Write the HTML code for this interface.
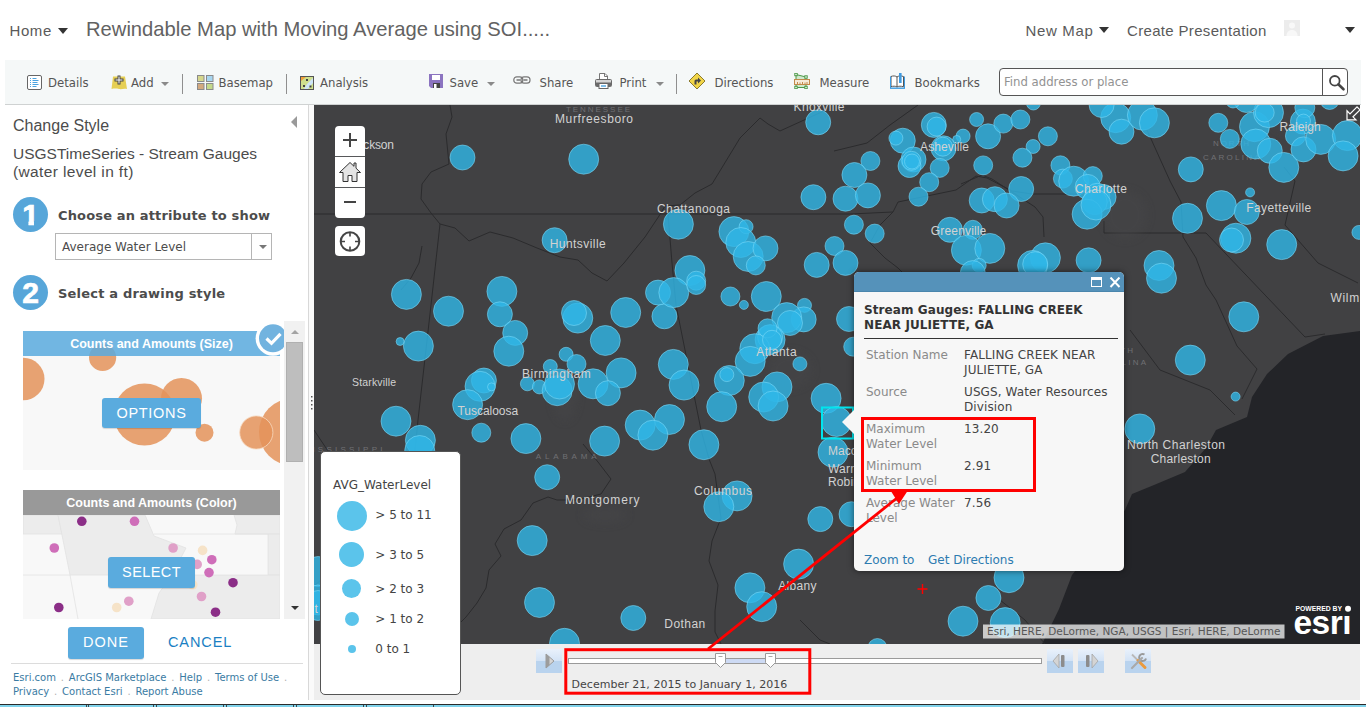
<!DOCTYPE html>
<html lang="en">
<head>
<meta charset="utf-8">
<title>Rewindable Map with Moving Average using SOI</title>
<style>
*{box-sizing:border-box;margin:0;padding:0}
html,body{width:1366px;height:707px;overflow:hidden;background:#fff}
body{position:relative;font-family:"Liberation Sans",sans-serif;color:#4c4c4c}
.abs{position:absolute}
.vd{font-family:"DejaVu Sans","Liberation Sans",sans-serif}
.vc{font-family:"DejaVu Sans Condensed","DejaVu Sans","Liberation Sans",sans-serif}
/* header */
#hdr{left:0;top:0;width:1366px;height:60px;background:#fff}
#hdr span{position:absolute;white-space:nowrap;color:#5a5a5a;line-height:1}
.tri{position:absolute;width:0;height:0;border-left:5px solid transparent;border-right:5px solid transparent;border-top:6px solid #333}
/* toolbar */
#tb{left:5px;top:60px;width:1356px;height:45px;background:#f5f8f8;border-bottom:1px solid #cfd2d2}
#tb .t{position:absolute;top:15px;font-size:13px;color:#555;white-space:nowrap;line-height:16px;font-family:"DejaVu Sans Condensed","DejaVu Sans",sans-serif}
#tb .sep{position:absolute;top:14px;width:1px;height:20px;background:#8f8f8f}
#tb .dd{position:absolute;top:22px;width:0;height:0;border-left:4px solid transparent;border-right:4px solid transparent;border-top:4px solid #8a8a8a}
#tb svg{position:absolute}
#search{left:994px;top:8px;width:349px;height:28px;border:1px solid #555;border-radius:4px;background:#fff}
#search span{position:absolute;left:4px;top:5px;font-size:13px;color:#929292;font-family:"DejaVu Sans Condensed","DejaVu Sans",sans-serif;line-height:16px}
#search i{position:absolute;left:322px;top:0;width:1px;height:26px;background:#555}
/* left panel */
#lp{left:5px;top:105px;width:304px;height:595px;background:#fff;border-right:1px solid #d8d8d8}
#lp .h1{position:absolute;left:8px;top:12px;font-size:16px;color:#4c4c4c;line-height:18px}
#lp .h2{position:absolute;left:8px;top:40px;font-size:15.5px;color:#4c4c4c;line-height:18px;white-space:nowrap}
.num{position:absolute;width:35px;height:35px;border-radius:50%;background:#57a6d9;color:#fff;font-weight:700;font-size:30px;line-height:35px;text-align:center;font-family:"Liberation Sans",sans-serif;-webkit-text-stroke:.7px #fff}
.num span{display:inline-block;height:35px;clip-path:polygon(0 0,100% 0,100% 23.900px,11.800px 23.900px,11.800px 100%,6.300px 100%,6.300px 23.900px,0 23.900px)}
.step{position:absolute;left:53px;font-weight:700;font-size:13px;letter-spacing:.15px;color:#4c4c4c;white-space:nowrap;line-height:16px}
#sel{left:50px;top:128px;width:217px;height:27px;border:1px solid #b5b5b5;background:#fff}
#sel span{position:absolute;left:6px;top:5.500px;font-size:12px;color:#4c4c4c;line-height:15px;white-space:nowrap}
#sel i{position:absolute;left:195px;top:0;width:1px;height:25px;background:#b5b5b5}
#sel b{position:absolute;left:203px;top:11px;width:0;height:0;border-left:4px solid transparent;border-right:4px solid transparent;border-top:4px solid #777}
.card{position:absolute;left:18px;width:257px;overflow:hidden;background:#f8f8f8}
.card .ch{position:absolute;left:0;top:0;width:257px;height:25px;color:#fff;font-weight:700;font-size:12.5px;line-height:26px;text-align:center;white-space:nowrap}
.btn{position:absolute;background:#5aabde;color:#fff;border-radius:3px;text-align:center;white-space:nowrap;box-shadow:0 1px 1px rgba(0,0,0,.15)}
#sb{left:279px;top:216px;width:21px;height:298px;background:#f1f1f1}
#sb .th{position:absolute;left:2px;top:21px;width:17px;height:120px;background:#bebebe;border:1px solid #b0b0b0}
#sb .up{position:absolute;left:6.500px;top:9px;width:0;height:0;border-left:4px solid transparent;border-right:4px solid transparent;border-bottom:4px solid #a3a3a3}
#sb .dn{position:absolute;left:6.500px;top:285px;width:0;height:0;border-left:4px solid transparent;border-right:4px solid transparent;border-top:4px solid #333}
#ft{left:8px;top:565.500px;width:290px;font-size:10px;line-height:14px;color:#3a7ba3}
#ft i{font-style:normal;color:#b0b0b0;margin:0 1.650px}
#gut{left:309px;top:105px;width:5px;height:595px;background:#fafafa}
/* map */
#map{left:314px;top:105px;width:1046px;height:539px;background:#414143;overflow:hidden}
#map svg{position:absolute;left:0;top:0}
.zb{position:absolute;left:21px;width:30px;background:#fff;border-radius:4px}
#ts{left:314px;top:644px;width:1046px;height:56px;background:#eeeeee}
.tbn{position:absolute;top:5px;height:24px;background:linear-gradient(#e9f1fb 0%,#d3e3f6 50%,#b9d3ee 52%,#b9d3ee 100%)}
#bot{left:0;top:704px;width:1366px;height:3px;background:#7fd2ea;border-top:1px solid #2a2a2a}
/* popup */
#pop{left:854px;top:272px;width:270px;height:299px;border-radius:5px;background:#f7f7f7;box-shadow:0 0 6px rgba(0,0,0,.55)}
#pop .ph{position:absolute;left:0;top:0;width:270px;height:20px;background:#5592ba;border-radius:5px 5px 0 0;border-bottom:1px solid #4a86ad}
#pop .pt{position:absolute;left:10px;top:31px;width:256px;font-weight:700;font-size:12px;line-height:15px;color:#333;white-space:nowrap;letter-spacing:.09px}
#pop hr{position:absolute;left:10px;top:66px;width:254px;height:1px;border:0;background:#333}
#pop .k{position:absolute;left:12px;font-size:12px;line-height:15px;color:#8a8a8a;white-space:nowrap}
#pop .v{position:absolute;left:110px;font-size:12px;line-height:15px;color:#444;white-space:nowrap;letter-spacing:.1px}
#pop .a{position:absolute;top:280.700px;font-size:12px;line-height:15px;color:#2d7bb0;white-space:nowrap}
/* legend */
#lg{left:320px;top:451px;width:141px;height:244px;background:#fff;border:1px solid #555;border-radius:5px}
#lg span{position:absolute;font-size:12px;line-height:15px;color:#444;white-space:nowrap}
#lg i{position:absolute;border-radius:50%;background:#5bc4eb}
.lbl{fill:#d2d2d2;font-family:"Liberation Sans",sans-serif;font-size:12px}
.st{fill:#707073;font-family:"Liberation Sans",sans-serif;font-size:8px}
</style>
</head>
<body>

<div id="hdr" class="abs">
  <span style="left:9.500px;top:22.800px;font-size:15px;letter-spacing:.6px">Home</span><i class="tri" style="left:57.500px;top:27.500px"></i>
  <span style="left:86px;top:19.200px;font-size:20.2px;color:#626262">Rewindable Map with Moving Average using SOI.....</span>
  <span style="left:1025.500px;top:22.800px;font-size:15px;letter-spacing:.65px">New Map</span><i class="tri" style="left:1098.500px;top:26.500px"></i>
  <span style="left:1127px;top:22.800px;font-size:15px;letter-spacing:.33px">Create Presentation</span>
  <svg class="abs" style="left:1284px;top:20px" width="16" height="16" viewBox="0 0 16 16"><rect width="16" height="16" fill="#ececec"/><circle cx="8" cy="5.5" r="3" fill="#f8f8f8"/><path d="M2.5 16c0-4 2.5-6 5.5-6s5.500 2 5.500 6z" fill="#f8f8f8"/></svg>
  <i class="tri" style="left:1344.500px;top:26.500px"></i>
</div>
<div id="tb" class="abs">
  <svg style="left:22px;top:15px" width="15" height="15" viewBox="0 0 15 15"><rect x=".5" y=".5" width="14" height="14" rx="1.500" fill="#fff" stroke="#666"/><g stroke="#4aa3e0" stroke-width="1"><path d="M3 3.500h1M3 5.500h1M3 7.500h1M3 9.500h1M3 11.500h1"/><path d="M5.500 3.500h4M5.500 5.500h6M5.500 7.500h5M5.500 9.500h6M5.500 11.500h4"/></g></svg>
  <span class="t" style="left:43px">Details</span>
  <svg style="left:106px;top:15px" width="17" height="16" viewBox="0 0 17 16"><path d="M2 1.500h12l2 12.500c-3-1-5 .6-8 0s-5-.4-7.500 0z" fill="#e6cf55"/><path d="M8 .5v9M3.500 5h9" stroke="#444" stroke-width="3"/><path d="M8 1.500v7M4.500 5h7" stroke="#fff" stroke-width="1"/></svg>
  <span class="t" style="left:126px">Add</span><i class="dd" style="left:156px"></i>
  <i class="sep" style="left:177px"></i>
  <svg style="left:192px;top:15px" width="17" height="16" viewBox="0 0 17 16"><g stroke="#8a8a8a"><rect x=".5" y=".5" width="6.500" height="6" fill="#d5d78c"/><rect x="9.500" y=".5" width="6.500" height="6" fill="#a7d6f0"/><rect x=".5" y="8.500" width="6.500" height="6" fill="#d3a97e"/><rect x="9.500" y="8.500" width="6.500" height="6" fill="#c4d98a"/></g></svg>
  <span class="t" style="left:213.500px">Basemap</span>
  <i class="sep" style="left:281px"></i>
  <svg style="left:295px;top:16px" width="14" height="14" viewBox="0 0 14 14"><rect x=".5" y=".5" width="13" height="13" fill="#cfe08d" stroke="#555"/><path d="M1 1h5l-5 4z" fill="#f0a03c"/><path d="M13 2 7 8l-3 5h4l5-6z" fill="#cfe6f7"/><g fill="#444"><rect x="6" y="3" width="2" height="2"/><rect x="9.500" y="9.500" width="2" height="2"/><rect x="3" y="9" width="2" height="2"/></g></svg>
  <span class="t" style="left:315px">Analysis</span>
  <svg style="left:424px;top:14px" width="14" height="14" viewBox="0 0 14 14"><path d="M0 0h14v14H2l-2-2z" fill="#8b74c0"/><rect x="3" y="1" width="8" height="5" fill="#fff"/><rect x="4" y="9" width="7" height="5" fill="#444"/><rect x="5" y="10" width="2.500" height="4" fill="#fff"/></svg>
  <span class="t" style="left:444.500px">Save</span><i class="dd" style="left:481.500px"></i>
  <svg style="left:508px;top:16px" width="18" height="9" viewBox="0 0 18 9"><g fill="none" stroke="#777" stroke-width="1.200"><rect x=".8" y=".8" width="9" height="6.400" rx="3"/><rect x="8" y=".8" width="9" height="6.400" rx="3"/><path d="M3.500 4h4M10.500 4h4" stroke-width="1.400"/></g></svg>
  <span class="t" style="left:534.500px">Share</span>
  <svg style="left:590px;top:13px" width="17" height="16" viewBox="0 0 17 16"><path d="M4.500 6.500v-6h5.500l2.500 2.500v3.500" fill="#fff" stroke="#777"/><path d="M9.500 .5v3h3" fill="none" stroke="#777"/><rect x=".5" y="6.500" width="16" height="7" rx="1" fill="#d4d4d4" stroke="#6a6a6a"/><rect x="1" y="9.500" width="15" height="3.500" fill="#6a6a6a"/><rect x="4" y="10.500" width="9" height="5" fill="#fff" stroke="#666"/><path d="M6 13h5" stroke="#4aa3e0" stroke-width="1.400"/></svg>
  <span class="t" style="left:614.500px">Print</span><i class="dd" style="left:650.500px"></i>
  <i class="sep" style="left:671px"></i>
  <svg style="left:683px;top:12px" width="18" height="18" viewBox="0 0 18 18"><path d="M9 1l8 8-8 8-8-8z" fill="#f1d548" stroke="#8a7a30" stroke-width="1"/><path d="M6.500 12.500v-3.500q0-1.500 1.500-1.500h2v-2l3 3-3 3v-2h-1.500v3z" fill="#444"/></svg>
  <span class="t" style="left:709.500px">Directions</span>
  <svg style="left:789px;top:13px" width="16" height="16" viewBox="0 0 16 16"><path d="M2 1.500l10 2.500v10.500H2z" fill="#cfe8cd" stroke="#4b9a47"/><rect x=".5" y="6.500" width="15" height="5" fill="#f6ead8" stroke="#c28a4a"/><path d="M3.500 9v2.500M6 9.500v2M8.500 9v2.500M11 9.500v2M13 9v2.500" stroke="#c28a4a"/><g fill="#fff" stroke="#4b9a47"><rect x=".8" y=".3" width="2.400" height="2.400"/><rect x="10.800" y="2.800" width="2.400" height="2.400"/><rect x=".8" y="13.300" width="2.400" height="2.400"/><rect x="10.800" y="13.300" width="2.400" height="2.400"/></g></svg>
  <span class="t" style="left:814.500px">Measure</span>
  <svg style="left:885px;top:13px" width="15" height="16" viewBox="0 0 15 16"><path d="M1 3.500c2-.8 4.500-.8 6 .5v10c-1.500-1-4-1-6-.3zM7 4c1.500-1.300 4-1.300 6.500-.5v10.200c-2.500-.7-5-.7-6.500.3" fill="#fff" stroke="#555" stroke-width="1"/><rect x="9" y="0" width="2.600" height="10" fill="#3f9be0"/><path d="M0 15.200h15" stroke="#3f9be0" stroke-width="1.400"/><path d="M.5 3.500v11.500M14.500 3.500v11.500" stroke="#3f9be0" stroke-width="1"/></svg>
  <span class="t" style="left:909.500px">Bookmarks</span>
  <div id="search" class="abs"><span>Find address or place</span><i></i>
    <svg style="left:328px;top:5px" width="18" height="18" viewBox="0 0 18 18"><circle cx="6.800" cy="6.800" r="4.800" fill="none" stroke="#444" stroke-width="1.800"/><path d="M10.300 10.300l5.200 5" stroke="#444" stroke-width="2.600" stroke-linecap="round"/></svg>
  </div>
</div>

<div id="lp" class="abs">
  <div class="h1">Change Style</div>
  <svg class="abs" style="left:285px;top:10px" width="8" height="14" viewBox="0 0 8 14"><path d="M7 1v12L1 7z" fill="#9a9a9a"/></svg>
  <div class="h2">USGSTimeSeries - Stream Gauges<br><span style="letter-spacing:.37px">(water level in ft)</span></div>
  <div class="num" style="left:8px;top:92px"><span>1</span></div>
  <div class="step vd" style="left:53px;top:103px">Choose an attribute to show</div>
  <div id="sel" class="abs vd"><span>Average Water Level</span><i></i><b></b></div>
  <div class="num" style="left:8px;top:170px">2</div>
  <div class="step vd" style="left:53px;top:181px;letter-spacing:.2px">Select a drawing style</div>

  <div class="card" style="top:226px;height:139px">
    <svg class="abs" style="left:0;top:0" width="257" height="139" viewBox="23 331 257 139">
      <g fill="#e4935a" fill-opacity=".85">
        <circle cx="23.200" cy="379" r="21.300"/><circle cx="102.600" cy="357.500" r="13.600"/>
        <circle cx="144.500" cy="414.500" r="31"/><circle cx="181.500" cy="398.500" r="20.500"/>
        <circle cx="204.500" cy="432.700" r="9"/><circle cx="256.300" cy="432.500" r="16.600"/>
        <circle cx="292.500" cy="432" r="33.500"/>
      </g>
      <circle cx="256.300" cy="432.500" r="16.600" fill="none" stroke="#f6d9c0" stroke-width=".8"/>
    </svg>
    <div class="ch" style="background:rgba(89,170,222,.85)">Counts and Amounts (Size)</div>
    <div class="btn" style="left:79px;top:67px;width:99px;height:30px;font-size:14.500px;line-height:30px;letter-spacing:.7px">OPTIONS</div>
  </div>
  <svg class="abs" style="left:249px;top:215px" width="40" height="40" viewBox="0 0 40 40"><circle cx="19" cy="18.300" r="17.400" fill="#fff"/><circle cx="19" cy="18.300" r="14" fill="#72b3df"/><path d="M12.500 18.500l5 4.800 9-9.500" fill="none" stroke="#fff" stroke-width="3.200"/></svg>

  <div class="card" style="top:385px;height:129px">
    <svg class="abs" style="left:0;top:0" width="257" height="129" viewBox="0 0 257 129">
      <rect width="257" height="129" fill="#f8f8f8"/>
      <g fill="#ececec" stroke="#e2e2e2" stroke-width=".8">
        <path d="M0 25h35l4 19H0z"/>
        <path d="M35 25h87l9 21 32 12-14 27H47z"/>
        <path d="M211 25h46v19h-45l2-9z"/>
        <path d="M245 44h12v41h-12z"/>
        <path d="M149 85h108v44H128l8-26z"/>
      </g>
      <g fill="none" stroke="#e2e2e2" stroke-width=".8"><path d="M131 44h114M47 85l8 44M47 85H0"/></g>
      <circle cx="58.8" cy="31.3" r="4.800" fill="#8b2e87"/><circle cx="111.5" cy="31.3" r="4.800" fill="#cf6eb9"/><circle cx="31.3" cy="58.0" r="4.800" fill="#cf6eb9"/><circle cx="150.1" cy="58.0" r="4.800" fill="#e0a0c8"/><circle cx="179.6" cy="60.4" r="4.800" fill="#f6e3c8"/><circle cx="188.8" cy="69.7" r="4.800" fill="#cf6eb9"/><circle cx="174.2" cy="74.4" r="4.800" fill="#e0a0c8"/><circle cx="186.0" cy="82.6" r="4.800" fill="#cf6eb9"/><circle cx="210.0" cy="92.7" r="4.800" fill="#8b2e87"/><circle cx="169.8" cy="94.8" r="4.800" fill="#f6e3c8"/><circle cx="178.5" cy="106.5" r="4.800" fill="#e0a0c8"/><circle cx="105.8" cy="111.2" r="4.800" fill="#e0a0c8"/><circle cx="93.7" cy="117.5" r="4.800" fill="#f6e3c8"/><circle cx="35.8" cy="117.5" r="4.800" fill="#8b2e87"/><circle cx="192.5" cy="122.2" r="4.800" fill="#8b2e87"/>
    </svg>
    <div class="ch" style="background:#999">Counts and Amounts (Color)</div>
    <div class="btn" style="left:85px;top:67px;width:87px;height:31px;font-size:14.500px;line-height:30px;letter-spacing:.4px">SELECT</div>
  </div>
  <div id="sb" class="abs"><i class="up"></i><i class="th"></i><i class="dn"></i></div>

  <div class="btn" style="left:63px;top:522px;width:76px;height:32px;font-size:14.500px;line-height:31px;letter-spacing:1px">DONE</div>
  <div class="abs" style="left:163px;top:522px;font-size:14.500px;line-height:31px;letter-spacing:.9px;color:#1b7fc3">CANCEL</div>
  <div class="abs" style="left:6px;top:558px;width:292px;height:1px;background:#dcdcdc"></div>
  <div id="ft" class="abs vd">Esri.com <i>.</i> ArcGIS Marketplace <i>.</i> Help <i>.</i> Terms of Use <i>.</i><br>Privacy <i>.</i> Contact Esri <i>.</i> Report Abuse</div>
</div>
<div id="gut" class="abs"><svg class="abs" style="left:1.500px;top:291px" width="3" height="16"><g fill="#555"><rect y="0" width="1.500" height="1.500"/><rect y="4" width="1.500" height="1.500"/><rect y="8" width="1.500" height="1.500"/><rect y="12" width="1.500" height="1.500"/></g></svg></div>

<div id="map" class="abs">
<svg width="1046" height="539" viewBox="314 105 1046 539">
  <defs><filter id="bl" x="-30%" y="-30%" width="160%" height="160%"><feGaussianBlur stdDeviation="4"/></filter></defs>
  <path d="M1360 331L1323 336 1288 354 1267 374 1252 397 1247 417 1216 430 1206 448 1185 472 1154 485 1132 494 1125 510 1100 540 1072 575 1059 609 1044 640 1042 644H1360z" fill="#232428"/>
  <g fill="none" stroke="#2b2b2d" stroke-width="1" stroke-linejoin="round"><path d="M314 214H850"/><path d="M440 224L431 305 418 420l-6 60 2 80 4 84"/><path d="M450 105l2 12-6 17 3 30-18 8-9 12-1 15 10 14 9 11 15 4 14 13 21-9 23 6 24 10 23 9 18 3 14 13 15 8 17-18 21-26 14-21 6-10 15-1 15-12 17-9 28-46 20-20 8 6 12 7 46-21"/><path d="M422 246l-3 17-8 15-10 12"/><path d="M668 214l4 49 4 42 25 125 8 29 6 15 6 44-9 23-3 20 9 24-3 26v21l6 12"/><path d="M834 151l33-8 23-18 28-20"/><path d="M850 214l43-2 5-10 58-12 20-14 11 2 25 13 20 3h48"/><path d="M961 184l21-9 10 4 20 13 23 15 8 10 1 20"/><path d="M1104 221v12H1206l99 104 20-3"/><path d="M893 212l-13 13-10 18 15 15 13 10 17 17"/><path d="M1147 130l23 51 11 21 2 35 13 21 10 27 10 15 21 46 20 23-15 30"/><path d="M1130 330l30 40 50 20 25 25"/><path d="M1284 167l11 14-10 44 33 38 40 20"/><path d="M430 555l-10 25-30 20-30 40M345 505l10 25-10 30-30 25M314 430l20 30"/><path d="M583 444l15 18 13 17-10 15-24 6h-20l-9-3-15 6-12 17-17 9-9 15 6 12-12 14-3 18-9 15-11 14-6 6"/><path d="M800 620l20 20 10 4M1000 600l25 20 20 24"/></g>
  <g fill="#47474a" opacity=".45" filter="url(#bl)"><ellipse cx="1125" cy="215" rx="22" ry="24"/><ellipse cx="790" cy="370" rx="22" ry="18"/><ellipse cx="565" cy="395" rx="12" ry="26"/><ellipse cx="1290" cy="120" rx="18" ry="12"/><ellipse cx="605" cy="515" rx="22" ry="8"/></g>
  <g><text class="st" x="302.5" y="452" textLength="80.0" lengthAdjust="spacing">MISSISSIPPI</text><text class="st" x="535.7" y="459" textLength="61.0" lengthAdjust="spacing">ALABAMA</text><text class="st" x="1213.0" y="146" textLength="36.0" lengthAdjust="spacing">NORTH</text><text class="st" x="1203.0" y="160" textLength="56.5" lengthAdjust="spacing">CAROLINA</text><text class="st" x="1097.0" y="353" textLength="36.0" lengthAdjust="spacing">SOUTH</text><text class="st" x="1089.5" y="365" textLength="56.5" lengthAdjust="spacing">CAROLINA</text><text class="st" x="566.0" y="112" textLength="64.0" lengthAdjust="spacing">TENNESSEE</text></g>
  <g fill="rgb(47,183,231)" fill-opacity=".8" stroke="rgb(130,220,250)" stroke-opacity=".55" stroke-width="1">
<circle cx="462.5" cy="157.5" r="12.5"/>
<circle cx="554.6" cy="240.2" r="12.5"/>
<circle cx="583.7" cy="159.2" r="15.0"/>
<circle cx="818.2" cy="122.3" r="12.5"/>
<circle cx="813.4" cy="197.2" r="12.5"/>
<circle cx="678.4" cy="224.2" r="15.0"/>
<circle cx="733.9" cy="231.6" r="15.0"/>
<circle cx="746.1" cy="226.7" r="7.0"/>
<circle cx="740.8" cy="242.5" r="15.0"/>
<circle cx="748.2" cy="256.5" r="15.0"/>
<circle cx="765.5" cy="248.4" r="12.5"/>
<circle cx="755.8" cy="265.4" r="9.5"/>
<circle cx="816.7" cy="264.9" r="12.5"/>
<circle cx="689.9" cy="270.5" r="15.0"/>
<circle cx="696.2" cy="280.7" r="9.5"/>
<circle cx="933.8" cy="124.9" r="12.5"/>
<circle cx="936.6" cy="126.6" r="9.5"/>
<circle cx="902.8" cy="140.7" r="12.5"/>
<circle cx="895.9" cy="138.1" r="7.0"/>
<circle cx="976.6" cy="119.5" r="7.0"/>
<circle cx="963.1" cy="136.1" r="7.0"/>
<circle cx="988.1" cy="136.3" r="12.5"/>
<circle cx="1003.3" cy="123.6" r="9.5"/>
<circle cx="1020.4" cy="119.5" r="9.5"/>
<circle cx="1033.4" cy="103.0" r="7.0"/>
<circle cx="1047.9" cy="136.3" r="9.5"/>
<circle cx="1033.1" cy="146.5" r="7.0"/>
<circle cx="1022.4" cy="157.7" r="9.5"/>
<circle cx="983.2" cy="165.4" r="9.5"/>
<circle cx="943.5" cy="148.3" r="12.5"/>
<circle cx="939.7" cy="167.9" r="9.5"/>
<circle cx="929.2" cy="182.2" r="9.5"/>
<circle cx="918.5" cy="196.7" r="9.5"/>
<circle cx="913.5" cy="159.5" r="12.5"/>
<circle cx="909.5" cy="166.0" r="11.5"/>
<circle cx="870.4" cy="161.0" r="9.5"/>
<circle cx="854.4" cy="175.0" r="12.5"/>
<circle cx="845.5" cy="198.7" r="12.5"/>
<circle cx="867.9" cy="195.4" r="12.5"/>
<circle cx="853.9" cy="224.7" r="9.5"/>
<circle cx="874.7" cy="233.6" r="9.5"/>
<circle cx="834.5" cy="246.0" r="9.5"/>
<circle cx="845.5" cy="262.9" r="12.5"/>
<circle cx="1021.2" cy="189.0" r="12.5"/>
<circle cx="981.7" cy="200.5" r="12.5"/>
<circle cx="994.9" cy="199.2" r="12.5"/>
<circle cx="1006.6" cy="205.5" r="12.5"/>
<circle cx="949.9" cy="229.8" r="12.5"/>
<circle cx="972.8" cy="229.8" r="9.5"/>
<circle cx="966.4" cy="250.2" r="15.0"/>
<circle cx="989.8" cy="248.4" r="15.0"/>
<circle cx="979.2" cy="265.4" r="7.0"/>
<circle cx="972.8" cy="273.1" r="12.5"/>
<circle cx="1045.4" cy="257.8" r="15.0"/>
<circle cx="1032.6" cy="265.4" r="15.0"/>
<circle cx="1035.2" cy="264.2" r="12.5"/>
<circle cx="1088.6" cy="260.3" r="12.5"/>
<circle cx="1115.7" cy="117.7" r="15.0"/>
<circle cx="1121.5" cy="131.7" r="12.5"/>
<circle cx="1142.4" cy="115.2" r="15.0"/>
<circle cx="1154.4" cy="122.8" r="15.0"/>
<circle cx="1101.6" cy="105.0" r="12.5"/>
<circle cx="1218.3" cy="122.8" r="9.5"/>
<circle cx="1229.8" cy="138.9" r="9.5"/>
<circle cx="1254.5" cy="126.7" r="15.0"/>
<circle cx="1255.8" cy="144.0" r="15.0"/>
<circle cx="1268.5" cy="112.6" r="15.0"/>
<circle cx="1264.7" cy="112.6" r="9.5"/>
<circle cx="1269.8" cy="150.8" r="12.5"/>
<circle cx="1283.8" cy="167.4" r="15.0"/>
<circle cx="1190.8" cy="169.4" r="12.5"/>
<circle cx="1250.1" cy="192.4" r="4.5"/>
<circle cx="1221.4" cy="205.6" r="15.0"/>
<circle cx="1246.8" cy="212.0" r="12.5"/>
<circle cx="1187.5" cy="218.3" r="15.0"/>
<circle cx="1235.9" cy="238.2" r="15.0"/>
<circle cx="1231.5" cy="240.0" r="12.0"/>
<circle cx="1281.7" cy="244.6" r="15.0"/>
<circle cx="1159.0" cy="265.5" r="15.0"/>
<circle cx="1161.5" cy="278.2" r="15.0"/>
<circle cx="1302.9" cy="121.6" r="12.5"/>
<circle cx="1295.4" cy="135.9" r="10.0"/>
<circle cx="1303.5" cy="149.4" r="12.5"/>
<circle cx="1320.7" cy="139.4" r="15.0"/>
<circle cx="1347.4" cy="135.6" r="15.0"/>
<circle cx="1343.1" cy="155.9" r="15.0"/>
<circle cx="1304.8" cy="107.7" r="10.0"/>
<circle cx="1358.9" cy="232.4" r="7.0"/>
<circle cx="1246.4" cy="100.0" r="12.5"/>
<circle cx="1329.6" cy="100.0" r="9.5"/>
<circle cx="406.4" cy="294.4" r="15.0"/>
<circle cx="448.5" cy="311.2" r="15.0"/>
<circle cx="501.9" cy="291.4" r="15.0"/>
<circle cx="499.9" cy="314.3" r="12.5"/>
<circle cx="515.2" cy="332.9" r="12.5"/>
<circle cx="508.8" cy="351.2" r="15.0"/>
<circle cx="418.4" cy="346.1" r="15.0"/>
<circle cx="400.1" cy="341.5" r="4.0"/>
<circle cx="483.9" cy="380.5" r="12.5"/>
<circle cx="480.0" cy="386.3" r="15.0"/>
<circle cx="491.5" cy="386.9" r="4.0"/>
<circle cx="467.6" cy="404.7" r="15.0"/>
<circle cx="396.0" cy="421.2" r="15.0"/>
<circle cx="420.4" cy="440.3" r="15.0"/>
<circle cx="419.7" cy="450.5" r="15.0"/>
<circle cx="481.3" cy="432.7" r="9.5"/>
<circle cx="525.9" cy="438.6" r="15.0"/>
<circle cx="566.1" cy="354.3" r="7.0"/>
<circle cx="550.3" cy="366.5" r="7.0"/>
<circle cx="527.4" cy="383.8" r="7.0"/>
<circle cx="539.4" cy="386.9" r="7.0"/>
<circle cx="557.2" cy="390.7" r="15.0"/>
<circle cx="577.8" cy="318.1" r="15.0"/>
<circle cx="574.0" cy="313.0" r="12.5"/>
<circle cx="625.7" cy="312.5" r="15.0"/>
<circle cx="605.3" cy="340.5" r="15.0"/>
<circle cx="664.4" cy="316.3" r="12.5"/>
<circle cx="658.0" cy="292.6" r="12.5"/>
<circle cx="673.8" cy="292.6" r="15.0"/>
<circle cx="696.2" cy="285.0" r="9.5"/>
<circle cx="730.4" cy="296.5" r="9.5"/>
<circle cx="743.9" cy="304.9" r="4.5"/>
<circle cx="766.3" cy="296.5" r="15.0"/>
<circle cx="804.5" cy="305.4" r="7.0"/>
<circle cx="803.7" cy="319.4" r="12.5"/>
<circle cx="786.7" cy="317.6" r="15.0"/>
<circle cx="790.0" cy="323.0" r="12.5"/>
<circle cx="770.1" cy="339.7" r="15.0"/>
<circle cx="770.1" cy="337.2" r="12.5"/>
<circle cx="767.5" cy="328.3" r="9.5"/>
<circle cx="754.8" cy="348.7" r="15.0"/>
<circle cx="750.2" cy="361.4" r="15.0"/>
<circle cx="799.9" cy="363.9" r="7.0"/>
<circle cx="729.3" cy="380.5" r="15.0"/>
<circle cx="726.8" cy="374.6" r="7.0"/>
<circle cx="721.7" cy="406.7" r="15.0"/>
<circle cx="777.0" cy="386.9" r="15.0"/>
<circle cx="763.7" cy="397.0" r="15.0"/>
<circle cx="773.1" cy="406.0" r="15.0"/>
<circle cx="673.3" cy="364.4" r="15.0"/>
<circle cx="684.0" cy="385.1" r="15.0"/>
<circle cx="621.1" cy="372.9" r="15.0"/>
<circle cx="593.1" cy="383.8" r="15.0"/>
<circle cx="607.9" cy="393.2" r="12.5"/>
<circle cx="576.5" cy="364.0" r="9.5"/>
<circle cx="669.5" cy="419.5" r="15.0"/>
<circle cx="640.2" cy="425.1" r="15.0"/>
<circle cx="652.9" cy="435.2" r="15.0"/>
<circle cx="604.6" cy="441.1" r="15.0"/>
<circle cx="703.9" cy="444.7" r="15.0"/>
<circle cx="826.1" cy="398.3" r="15.0"/>
<circle cx="836.6" cy="421.5" r="15.0"/>
<circle cx="833.0" cy="452.2" r="15.0"/>
<circle cx="849.0" cy="319.0" r="12.5"/>
<circle cx="853.2" cy="346.7" r="9.5"/>
<circle cx="1243.8" cy="316.8" r="15.0"/>
<circle cx="1190.3" cy="360.1" r="15.0"/>
<circle cx="1235.6" cy="396.6" r="4.5"/>
<circle cx="1139.8" cy="428.9" r="15.0"/>
<circle cx="547.2" cy="477.2" r="12.5"/>
<circle cx="532.2" cy="540.6" r="15.0"/>
<circle cx="539.5" cy="602.5" r="15.0"/>
<circle cx="633.3" cy="618.0" r="12.5"/>
<circle cx="564.5" cy="643.3" r="15.0"/>
<circle cx="737.1" cy="495.9" r="15.0"/>
<circle cx="718.8" cy="506.7" r="15.0"/>
<circle cx="820.3" cy="519.1" r="12.5"/>
<circle cx="851.5" cy="514.2" r="12.5"/>
<circle cx="798.6" cy="564.1" r="15.0"/>
<circle cx="749.9" cy="587.8" r="15.0"/>
<circle cx="761.7" cy="606.7" r="15.0"/>
<circle cx="877.4" cy="648.0" r="9.5"/>
<circle cx="1009.0" cy="577.7" r="15.0"/>
<circle cx="988.4" cy="598.0" r="12.5"/>
<circle cx="963.0" cy="621.2" r="15.0"/>
<circle cx="1005.2" cy="622.6" r="15.0"/>
<circle cx="318.0" cy="571.5" r="15.0"/>
<circle cx="318.0" cy="600.0" r="15.0"/>
<circle cx="318.0" cy="605.5" r="15.0"/>
<circle cx="1060.4" cy="165.3" r="9.5"/>
<circle cx="1062.9" cy="178.6" r="9.5"/>
<circle cx="1073.7" cy="181.2" r="15.0"/>
<circle cx="1092.8" cy="176.1" r="9.5"/>
<circle cx="1087.7" cy="186.9" r="12.5"/>
<circle cx="1097.3" cy="195.8" r="12.5"/>
<circle cx="1103.6" cy="197.1" r="12.5"/>
<circle cx="1094.7" cy="202.2" r="12.5"/>
<circle cx="1087.1" cy="214.2" r="15.0"/>
<circle cx="1096.0" cy="205.0" r="15.0"/>
<circle cx="911.5" cy="160.8" r="9.5"/>
<circle cx="912.0" cy="161.5" r="7.5"/>
<circle cx="956.7" cy="139.4" r="4.0"/>
<circle cx="1303.5" cy="121.1" r="7.0"/>
<circle cx="1233.0" cy="101.0" r="7.0"/>
<circle cx="942.9" cy="146.7" r="9.5"/>
<circle cx="772.0" cy="339.8" r="9.5"/>
<circle cx="559.5" cy="384.0" r="15.0"/>
  </g>
  <rect x="822" y="407.500" width="31" height="31" fill="none" stroke="#00e5ee" stroke-width="2"/>
  <g><text class="lbl" x="793.5" y="111" textLength="51.0" lengthAdjust="spacing">Knoxville</text><text class="lbl" x="555.0" y="123" textLength="78.0" lengthAdjust="spacing">Murfreesboro</text><text class="lbl" x="351.0" y="149" textLength="43.0" lengthAdjust="spacing">Jackson</text><text class="lbl" x="920.0" y="151" textLength="49.0" lengthAdjust="spacing">Asheville</text><text class="lbl" x="1279.5" y="131" textLength="41.3" lengthAdjust="spacing">Raleigh</text><text class="lbl" x="1075.0" y="193" textLength="52.0" lengthAdjust="spacing">Charlotte</text><text class="lbl" x="657.0" y="213" textLength="73.0" lengthAdjust="spacing">Chattanooga</text><text class="lbl" x="1246.3" y="212" textLength="65.0" lengthAdjust="spacing">Fayetteville</text><text class="lbl" x="930.8" y="235" textLength="55.5" lengthAdjust="spacing">Greenville</text><text class="lbl" x="549.7" y="248" textLength="56.0" lengthAdjust="spacing">Huntsville</text><text class="lbl" x="1330.4" y="302" textLength="66.0" lengthAdjust="spacing">Wilmington</text><text class="lbl" x="756.3" y="356" textLength="40.3" lengthAdjust="spacing">Atlanta</text><text class="lbl" x="522.0" y="378" textLength="68.8" lengthAdjust="spacing">Birmingham</text><text class="lbl" x="457.5" y="415" textLength="60.6" lengthAdjust="spacing">Tuscaloosa</text><text class="lbl" x="1127.0" y="449" textLength="98.0" lengthAdjust="spacing">North Charleston</text><text class="lbl" x="1150.7" y="463" textLength="60.0" lengthAdjust="spacing">Charleston</text><text class="lbl" x="828.0" y="455" textLength="36.0" lengthAdjust="spacing">Macon</text><text class="lbl" x="828.0" y="473" textLength="40.0" lengthAdjust="spacing">Warner</text><text class="lbl" x="828.0" y="486" textLength="38.0" lengthAdjust="spacing">Robins</text><text class="lbl" x="565.0" y="504" textLength="74.6" lengthAdjust="spacing">Montgomery</text><text class="lbl" x="694.0" y="495" textLength="58.0" lengthAdjust="spacing">Columbus</text><text class="lbl" x="778.3" y="590" textLength="38.2" lengthAdjust="spacing">Albany</text><text class="lbl" x="664.3" y="628" textLength="41.0" lengthAdjust="spacing">Dothan</text><text class="lbl" x="352" y="386" style="font-size:10.500px" textLength="44" lengthAdjust="spacing">Starkville</text><text class="lbl" x="314.5" y="613">t</text></g>
  <rect x="983" y="624.500" width="301.500" height="14" fill="#fff" fill-opacity=".72"/>
  <text x="987" y="635" textLength="293.500" lengthAdjust="spacing" style="font-family:'DejaVu Sans',sans-serif;font-size:10.500px;fill:#575757">Esri, HERE, DeLorme, NGA, USGS | Esri, HERE, DeLorme</text>
  <text x="1295.500" y="611.300" textLength="46.500" lengthAdjust="spacingAndGlyphs" style="font-family:'Liberation Sans',sans-serif;font-size:7px;font-weight:700;fill:#fff">POWERED BY</text>
  <circle cx="1348" cy="608.800" r="3" fill="#fff"/>
  <text x="1293.500" y="634.300" textLength="58" lengthAdjust="spacing" style="font-family:'Liberation Sans',sans-serif;font-size:33.500px;font-weight:700;fill:#fff">esr&#305;</text>
  <g transform="translate(1343.500,105.300)"><path d="M13.500 1.500l-7 7-3-3v9h9l-3-3 7-7z" fill="#414143" stroke="#fff" stroke-width="1.200"/></g>
</svg>
<div class="zb" style="top:21px;height:92px">
  <svg width="30" height="92" viewBox="0 0 30 92"><path d="M0 30.500h30M0 61.500h30" stroke="#57585a" stroke-width="1"/><path d="M8 14h14M15 7v14M9 76h12" stroke="#444" stroke-width="2" fill="none"/><path d="M15 36.500l-10.500 10h3.500v9h5v-6h4v6h5v-9h3.500l-4.500-4.300v-5.200h-2v3.300z" fill="#e4e4e4" stroke="#333" stroke-width="1"/></svg>
</div>
<div class="zb" style="top:121px;height:30px"><svg width="30" height="30" viewBox="0 0 30 30"><circle cx="15" cy="15.500" r="9.300" fill="none" stroke="#444" stroke-width="2"/><path d="M15 6v4.500M15 20.500v4.500M5.500 15.500h4.500M20 15.500h4.500" stroke="#444" stroke-width="1.600"/></svg></div>
</div>

<div id="ts" class="abs">
  <div class="tbn" style="left:222px;width:26px"><svg width="26" height="24" viewBox="0 0 26 24"><path d="M10 5v14l8-7z" fill="#d6d6d6" stroke="#9a9a9a" stroke-width="1"/><path d="M10 5v14l3.500-3v-8z" fill="#9c9c9c"/></svg></div>
  <div class="abs" style="left:254px;top:14px;width:474px;height:6px;background:#fff;border:1px solid #9a9a9a"></div>
  <div class="abs" style="left:406px;top:15px;width:50px;height:4px;background:#cddaf4"></div>
  <svg class="abs" style="left:400px;top:8.300px" width="13" height="17" viewBox="0 0 13 17"><path d="M1.500 1.500h10v9l-5 5-5-5z" fill="#fff" stroke="#9a9a9a"/><path d="M4.500 4.500h4" stroke="#aaa"/></svg>
  <svg class="abs" style="left:450px;top:8.300px" width="13" height="17" viewBox="0 0 13 17"><path d="M1.500 1.500h10v9l-5 5-5-5z" fill="#fff" stroke="#9a9a9a"/><path d="M4.500 4.500h4" stroke="#aaa"/></svg>
  <div class="abs vd" style="left:257.500px;top:34px;font-size:11px;line-height:13px;color:#444;white-space:nowrap;letter-spacing:.03px">December 21, 2015 to January 1, 2016</div>
  <div class="tbn" style="left:733px;width:26px"><svg width="26" height="24" viewBox="0 0 26 24"><path d="M12 5v14l-6-7z" fill="#d4d4d4" stroke="#a5a5a5" stroke-width=".8"/><rect x="14" y="6" width="3.500" height="12" rx="1" fill="#8c8c8c"/></svg></div>
  <div class="tbn" style="left:764px;width:26px"><svg width="26" height="24" viewBox="0 0 26 24"><rect x="8" y="6" width="3.500" height="12" rx="1" fill="#8c8c8c"/><path d="M14 5v14l6-7z" fill="#d4d4d4" stroke="#a5a5a5" stroke-width=".8"/></svg></div>
  <div class="tbn" style="left:811px;width:26px"><svg width="26" height="24" viewBox="0 0 26 24"><path d="M7 5.500l6 6" stroke="#b9b9b9" stroke-width="1.800"/><path d="M13 11.500l7 7" stroke="#eb9a3d" stroke-width="3" stroke-linecap="round"/><path d="M19.500 5.500a3.500 3.500 0 1 0 1.500 4" fill="none" stroke="#9a9a9a" stroke-width="2"/><path d="M17 9l-10 10" stroke="#a9a9a9" stroke-width="2.200" stroke-linecap="round"/></svg></div>
</div>
<div class="abs" style="left:0;top:700px;width:1366px;height:4px;background:#fff"></div>
<div id="bot" class="abs"><svg class="abs" style="left:0;top:0" width="1366" height="2" viewBox="0 0 1366 2"><path d="M86.500 0v2M88.500 0v2M153.500 0v2M156.500 0v2M223.500 0v2M226.500 0v2M293.500 0v2M296.500 0v2M363.500 0v2M366.500 0v2M433.500 0v2" stroke="#3a4a50" stroke-width="1"/></svg></div>

<div id="lg" class="abs vd">
  <span style="left:12px;top:25.700px">AVG_WaterLevel</span>
  <i style="left:15.800px;top:48.500px;width:30px;height:30px"></i><span style="left:54.300px;top:56px">&gt; 5 to 11</span>
  <i style="left:18.300px;top:90px;width:25px;height:25px"></i><span style="left:54.300px;top:95.500px">&gt; 3 to 5</span>
  <i style="left:21.300px;top:127px;width:19px;height:19px"></i><span style="left:54.300px;top:129.500px">&gt; 2 to 3</span>
  <i style="left:23.800px;top:160px;width:14px;height:14px"></i><span style="left:54.300px;top:159.500px">&gt; 1 to 2</span>
  <i style="left:26.800px;top:193px;width:8px;height:8px"></i><span style="left:54.300px;top:189.500px">0 to 1</span>
</div>

<div id="pop" class="abs vd">
  <div class="ph">
    <svg class="abs" style="left:237px;top:5px" width="30" height="11" viewBox="0 0 30 11"><rect x=".5" y="1.500" width="10" height="8" fill="none" stroke="#fff" stroke-width="1"/><rect x="0" y="0" width="11" height="3" fill="#fff"/><path d="M19.500 .5l9 9.500M28.500 .5l-9 9.500" stroke="#fff" stroke-width="2"/></svg>
  </div>
  <div class="pt">Stream Gauges: FALLING CREEK<br>NEAR JULIETTE, GA</div>
  <hr>
  <div class="k" style="top:76px">Station Name</div><div class="v" style="top:76px">FALLING CREEK NEAR<br>JULIETTE, GA</div>
  <div class="k" style="top:113px">Source</div><div class="v" style="top:113px">USGS, Water Resources<br>Division</div>
  <div class="k" style="top:150px">Maximum<br>Water Level</div><div class="v" style="top:150px">13.20</div>
  <div class="k" style="top:187px">Minimum<br>Water Level</div><div class="v" style="top:187px">2.91</div>
  <div class="k" style="top:224px">Average Water<br>Level</div><div class="v" style="top:224px">7.56</div>
  <div class="a" style="left:10px">Zoom to</div><div class="a" style="left:74px">Get Directions</div>
  <svg class="abs" style="left:-12px;top:138px" width="12" height="24" viewBox="0 0 12 24"><path d="M12 0v24L0 12z" fill="#f7f7f7"/></svg>
</div>

<svg class="abs" style="left:0;top:0;pointer-events:none" width="1366" height="707" viewBox="0 0 1366 707">
  <g fill="none" stroke="#f00">
    <rect x="862.500" y="418.500" width="172" height="72" stroke-width="3"/>
    <rect x="565.800" y="649.700" width="244" height="43.500" stroke-width="3"/>
    <path d="M708 649L897 498" stroke-width="2.800"/>
    <path d="M917.500 589h10M922.500 584v10" stroke-width="1.400"/>
  </g>
  <path d="M891.500 492l16-1-8.500 13z" fill="#f00"/>
</svg>
</body>
</html>
